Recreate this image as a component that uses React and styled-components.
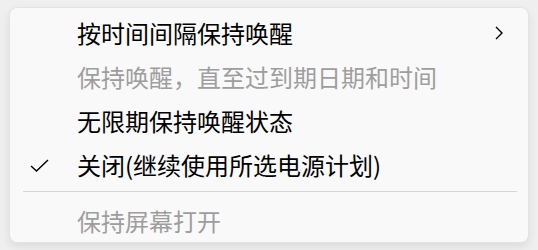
import React from 'react';
import styled, { createGlobalStyle } from 'styled-components';

const Global = createGlobalStyle`
  html, body {
    margin: 0;
    padding: 0;
    background: #efefef;
    font-family: "Noto Sans CJK SC", "Microsoft YaHei", sans-serif;
    overflow: hidden;
  }
`;

const Page = styled.div`
  width: 538px;
  height: 250px;
  padding: 7px 0 0 9px;
  box-sizing: border-box;
`;

const Menu = styled.div`
  width: 520px;
  height: 236px;
  box-sizing: border-box;
  padding-top: 3px;
  background: #f9f9f9;
  border-radius: 8px;
  border: 1px solid #e3e3e3;
  box-shadow: 0 4px 10px rgba(0, 0, 0, 0.08);
  display: flex;
  flex-direction: column;
  overflow: hidden;
`;

const Item = styled.div`
  height: 44px;
  flex: none;
  display: grid;
  grid-template-columns: 67px 1fr 34px;
  align-items: center;
  font-size: 24px;
  line-height: 1;
  color: ${(p) => (p.disabled ? '#9e9e9e' : '#000')};
`;

const Mark = styled.span`
  display: flex;
  justify-content: flex-start;
  padding-left: 20px;
`;

const Label = styled.span`
  white-space: nowrap;
`;

const Separator = styled.div`
  height: 1px;
  flex: none;
  margin: 4px 11px 7px 13px;
  background: #d6d6d6;
`;

const Chevron = () => (
  <svg width="10" height="14" viewBox="0 0 10 14">
    <path d="M2 1 L8 7 L2 13" fill="none" stroke="#000" strokeWidth="1.4" />
  </svg>
);

const Check = () => (
  <svg width="19" height="13" viewBox="0 0 19 13">
    <path d="M1 7 L6.5 12 L18 1" fill="none" stroke="#000" strokeWidth="1.4" />
  </svg>
);

export default function App() {
  return (
    <Page>
      <Global />
      <Menu>
        <Item>
          <Mark />
          <Label>按时间间隔保持唤醒</Label>
          <Chevron />
        </Item>
        <Item disabled>
          <Mark />
          <Label>保持唤醒，直至过到期日期和时间</Label>
        </Item>
        <Item>
          <Mark />
          <Label>无限期保持唤醒状态</Label>
        </Item>
        <Item>
          <Mark>
            <Check />
          </Mark>
          <Label>关闭(继续使用所选电源计划)</Label>
        </Item>
        <Separator />
        <Item disabled>
          <Mark />
          <Label>保持屏幕打开</Label>
        </Item>
      </Menu>
    </Page>
  );
}
